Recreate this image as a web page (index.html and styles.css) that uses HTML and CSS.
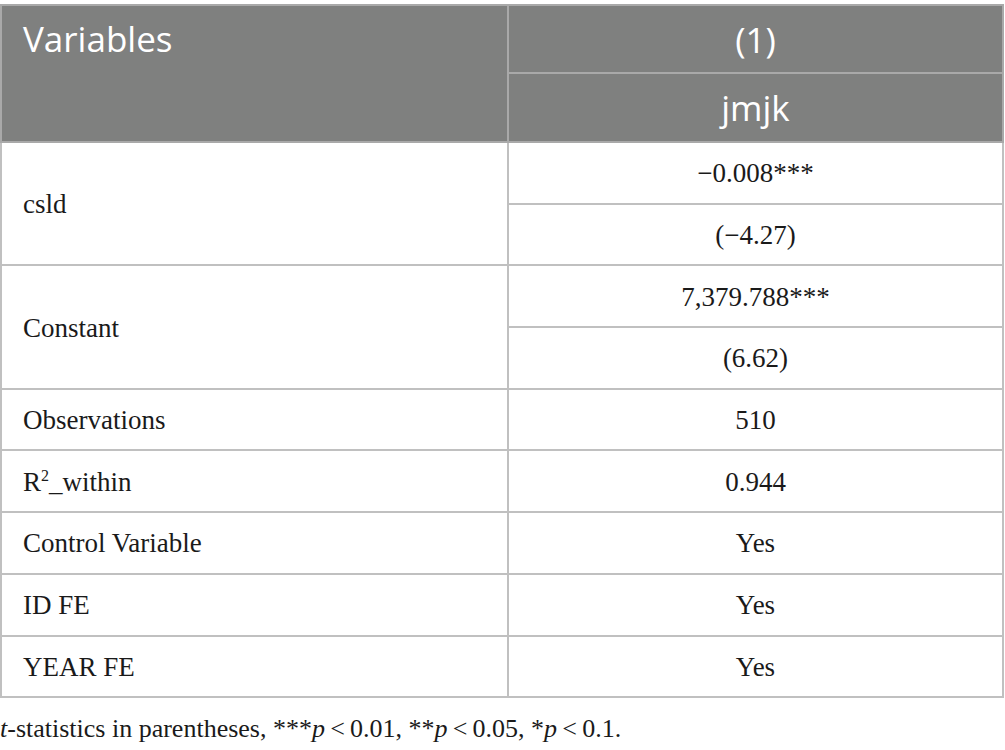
FILE: index.html
```html
<!DOCTYPE html>
<html>
<head>
<meta charset="utf-8">
<link rel="stylesheet" href="styles.css">
</head>
<body>
<table class="tbl">
  <thead>
    <tr class="h1">
      <th class="var" rowspan="2">Variables</th>
      <th class="num">(1)</th>
    </tr>
    <tr class="h2">
      <th class="num">jmjk</th>
    </tr>
  </thead>
  <tbody>
    <tr><td class="lbl" rowspan="2">csld</td><td class="val">&minus;0.008***</td></tr>
    <tr><td class="val">(&minus;4.27)</td></tr>
    <tr><td class="lbl" rowspan="2">Constant</td><td class="val">7,379.788***</td></tr>
    <tr><td class="val">(6.62)</td></tr>
    <tr><td class="lbl">Observations</td><td class="val">510</td></tr>
    <tr><td class="lbl">R<sup>2</sup>_within</td><td class="val">0.944</td></tr>
    <tr><td class="lbl">Control Variable</td><td class="val">Yes</td></tr>
    <tr><td class="lbl">ID FE</td><td class="val">Yes</td></tr>
    <tr><td class="lbl">YEAR FE</td><td class="val">Yes</td></tr>
  </tbody>
</table>
<p class="note"><i>t</i>-statistics in parentheses, ***<i>p</i>&thinsp;&lt;&thinsp;0.01, **<i>p</i>&thinsp;&lt;&thinsp;0.05, *<i>p</i>&thinsp;&lt;&thinsp;0.1.</p>
</body>
</html>
```
FILE: styles.css
```css
html, body {
  margin: 0;
  padding: 0;
  background: #ffffff;
}
body {
  padding-top: 4px;
}
.tbl {
  border-collapse: collapse;
  width: 1004px;
  font-family: "Liberation Serif", "Times New Roman", serif;
  color: #1a1a1a;
}
.tbl th, .tbl td {
  border: 2px solid #c0c0c0;
  padding: 0 0 0 21px;
}
.tbl thead th {
  background: #7f807f;
  color: #ffffff;
  font-family: "Open Sans", "Noto Sans", sans-serif;
  font-weight: 400;
  font-size: 35px;
  border-color: #a9a9a9;
}
.tbl th.var {
  width: 484px;
  text-align: left;
  vertical-align: top;
  padding-top: 13px;
  line-height: 40px;
}
.tbl th.num {
  text-align: center;
  padding-left: 0;
}
.h1 th.num {
  height: 66px;
}
.h2 th {
  height: 67px;
}
.tbl td {
  font-size: 27px;
  height: 57.7px;
  padding-top: 2px;
}
.tbl td.val {
  text-align: center;
  padding-left: 0;
}
.tbl sup {
  font-size: 16px;
  line-height: 0;
  vertical-align: 10px;
}
.note {
  margin: 16px 0 0 0;
  font-family: "Liberation Serif", "Times New Roman", serif;
  font-size: 26px;
  color: #1a1a1a;
}
```
